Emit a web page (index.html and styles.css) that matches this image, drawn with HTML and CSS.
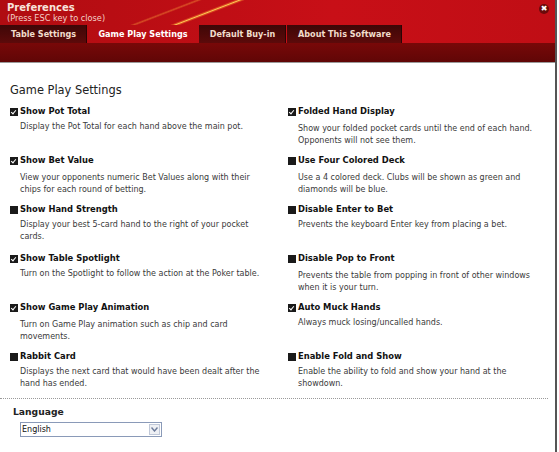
FILE: index.html
```html
<!DOCTYPE html>
<html lang="en">
<head>
    <meta charset="UTF-8">
    <title>Preferences</title>
    <link rel="stylesheet" href="styles.css">
</head>
<body>
    <div class="window">
        <div class="header">
            <span class="streak main"></span>
            <span class="streak faint"></span>
            <div class="titlebar">
                <div class="title">
                    <h1>Preferences</h1>
                    <span class="hint">(Press ESC key to close)</span>
                </div>
                <span class="close">&#10006;</span>
            </div>
            <div class="tabs">
                <div class="tab t1">Table Settings</div>
                <div class="tab t2 active">Game Play Settings</div>
                <div class="tab t3">Default Buy-in</div>
                <div class="tab t4">About This Software</div>
            </div>
            <div class="tab-band"></div>
        </div>

        <div class="content">
            <h2>Game Play Settings</h2>

            <div class="options">
                <div class="option">
                    <div class="label"><span class="check on"></span>Show Pot Total</div>
                    <p>Display the Pot Total for each hand above the main pot.</p>
                </div>
                <div class="option">
                    <div class="label"><span class="check on"></span>Folded Hand Display</div>
                    <p class="far">Show your folded pocket cards until the end of each hand. Opponents will not see them.</p>
                </div>

                <div class="option">
                    <div class="label"><span class="check on"></span>Show Bet Value</div>
                    <p class="far">View your opponents numeric Bet Values along with their chips for each round of betting.</p>
                </div>
                <div class="option">
                    <div class="label"><span class="check"></span>Use Four Colored Deck</div>
                    <p class="far">Use a 4 colored deck. Clubs will be shown as green and diamonds will be blue.</p>
                </div>

                <div class="option">
                    <div class="label"><span class="check"></span>Show Hand Strength</div>
                    <p>Display your best 5-card hand to the right of your pocket cards.</p>
                </div>
                <div class="option">
                    <div class="label"><span class="check"></span>Disable Enter to Bet</div>
                    <p>Prevents the keyboard Enter key from placing a bet.</p>
                </div>

                <div class="option">
                    <div class="label"><span class="check on"></span>Show Table Spotlight</div>
                    <p>Turn on the Spotlight to follow the action at the Poker table.</p>
                </div>
                <div class="option">
                    <div class="label"><span class="check"></span>Disable Pop to Front</div>
                    <p class="far">Prevents the table from popping in front of other windows when it is your turn.</p>
                </div>

                <div class="option">
                    <div class="label"><span class="check on"></span>Show Game Play Animation</div>
                    <p class="far">Turn on Game Play animation such as chip and card movements.</p>
                </div>
                <div class="option">
                    <div class="label"><span class="check on"></span>Auto Muck Hands</div>
                    <p>Always muck losing/uncalled hands.</p>
                </div>

                <div class="option">
                    <div class="label"><span class="check"></span>Rabbit Card</div>
                    <p>Displays the next card that would have been dealt after the hand has ended.</p>
                </div>
                <div class="option">
                    <div class="label"><span class="check"></span>Enable Fold and Show</div>
                    <p>Enable the ability to fold and show your hand at the showdown.</p>
                </div>
            </div>

            <div class="language">
                <h3>Language</h3>
                <div class="select">
                    <span>English</span>
                    <span class="arrow">
                        <svg width="7" height="5" viewBox="0 0 7 5"><path d="M0.5 0.5 L3.5 4 L6.5 0.5" fill="none" stroke="#6b7a9a" stroke-width="1.4"/></svg>
                    </span>
                </div>
            </div>
        </div>
    </div>
</body>
</html>
```

FILE: styles.css
```css
body {
    margin: 0;
    font-family: "DejaVu Sans", Verdana, sans-serif;
    background: #ffffff;
}

.window {
    width: 555px;
    height: 452px;
    border-right: 2px solid #555555;
    overflow: hidden;
}

.header {
    position: relative;
    overflow: hidden;
    background: linear-gradient(90deg, #b00c11 0%, #c80f17 60%, #c00e15 100%);
}

/* light streaks slanting across the title strip */
.streak {
    position: absolute;
    top: 0;
    height: 25px;
    transform-origin: top left;
    transform: skewX(-69deg);
}

.streak.main {
    left: 234px;
    width: 12px;
    background: linear-gradient(90deg, rgba(255, 120, 40, 0) 0%, rgba(255, 150, 50, 0.5) 30%, rgba(255, 215, 90, 0.95) 50%, rgba(255, 150, 50, 0.5) 70%, rgba(255, 120, 40, 0) 100%);
}

.streak.faint {
    left: 194px;
    width: 9px;
    background: linear-gradient(90deg, rgba(255, 140, 40, 0) 0%, rgba(255, 170, 60, 0.4) 50%, rgba(255, 140, 40, 0) 100%);
}

.titlebar {
    position: relative;
    height: 25px;
    display: flex;
    justify-content: space-between;
    align-items: flex-start;
    padding: 0 6px 0 7px;
}

.title h1 {
    margin: 2px 0 0;
    font-size: 10px;
    line-height: 11px;
    font-weight: bold;
    color: #f8e4dc;
}

.hint {
    display: block;
    font-size: 8.2px;
    line-height: 10px;
    color: #f3d0c8;
}

.close {
    margin-top: 4px;
    width: 10px;
    height: 10px;
    border-radius: 50%;
    background: #6a0a0a;
    color: #ffffff;
    font-size: 8px;
    line-height: 10px;
    text-align: center;
}

.tabs {
    position: relative;
    height: 18px;
    display: flex;
    gap: 1px;
}

.tab {
    font-size: 8.1px;
    font-weight: bold;
    line-height: 18px;
    text-align: center;
    color: #f1dccc;
    background: linear-gradient(180deg, #3e0707 0%, #5c0a0a 100%);
    box-shadow: inset -1px 0 0 #2a0404;
}

.t1 { width: 87px; }
.t2 { width: 110px; }
.t3 { width: 87px; }
.t4 { width: 115px; }

.tab.active {
    background: transparent;
    box-shadow: none;
    color: #ffffff;
}

.tab-band {
    position: relative;
    height: 19px;
    background: linear-gradient(180deg, #780808 0%, #600606 100%);
    border-bottom: 1px solid #9a9a9a;
}

.content {
    padding: 20px 0 0 0;
    color: #333333;
}

h2 {
    margin: 0 0 9px 10px;
    font-size: 11.4px;
    font-weight: normal;
    color: #222222;
}

.options {
    display: grid;
    grid-template-columns: 278px 1fr;
    grid-auto-rows: 49px;
    padding-left: 10px;
}

.label {
    display: flex;
    align-items: center;
    gap: 2px;
    font-size: 8.4px;
    font-weight: bold;
    line-height: 11px;
    color: #111111;
}

.check {
    position: relative;
    width: 8px;
    height: 8px;
    background: #1a1a1a;
}

/* tick drawn inside the box */
.check.on::after {
    content: "";
    position: absolute;
    left: 2px;
    top: 1px;
    width: 2px;
    height: 4px;
    border: solid #ffffff;
    border-width: 0 1.5px 1.5px 0;
    transform: rotate(40deg);
}

.option p {
    margin: 4px 0 0 10px;
    font-size: 8px;
    line-height: 12px;
    color: #3a3a3a;
    max-width: 250px;
}

.option p.far {
    margin-top: 6px;
}

.language {
    margin-top: -2px;
    border-top: 1px dotted #9a9a9a;
    width: 535px;
    padding: 7px 0 0 13px;
}

h3 {
    margin: 0 0 5px;
    font-size: 9.2px;
    font-weight: bold;
    color: #222222;
}

.select {
    margin-left: 7px;
    width: 139px;
    height: 13px;
    border: 1px solid #8a9ab8;
    display: flex;
    justify-content: space-between;
    align-items: center;
    font-size: 8px;
    color: #111111;
    padding-left: 1px;
}

.arrow {
    width: 11px;
    height: 11px;
    margin-right: 1px;
    border: 1px solid #c0c8d8;
    background: #eef0f4;
    display: flex;
    justify-content: center;
    align-items: center;
    box-sizing: border-box;
}
```
